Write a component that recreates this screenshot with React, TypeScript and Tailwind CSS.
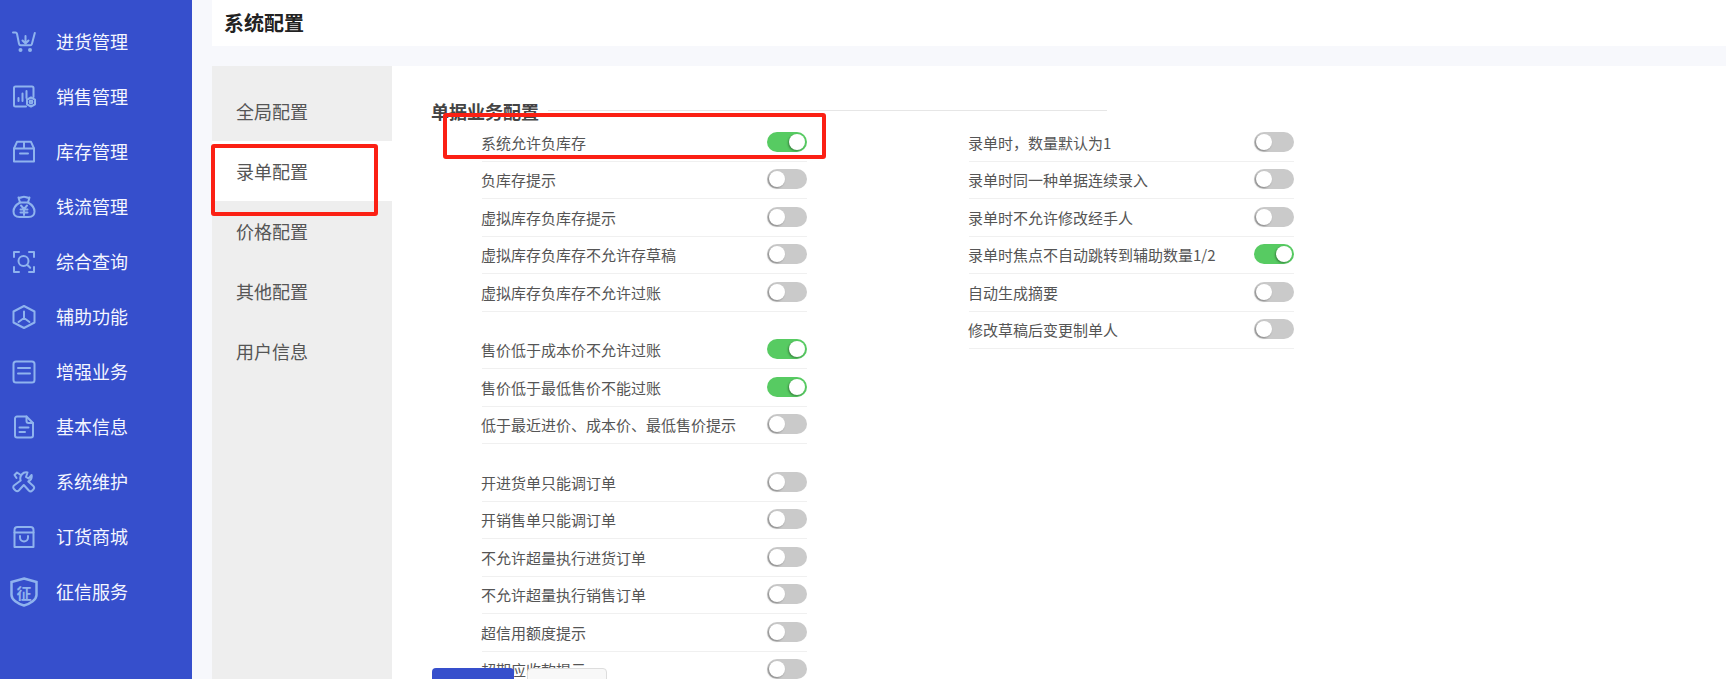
import type { ReactNode } from 'react';

const iconClass = 'h-6 w-6 shrink-0 fill-none stroke-[#8fb3ee] stroke-2';

function Svg({ children }: { children: ReactNode }) {
  return (
    <svg viewBox="0 0 24 24" className={iconClass} strokeLinecap="round" strokeLinejoin="round">
      {children}
    </svg>
  );
}

const menu: { label: string; icon: ReactNode }[] = [
  {
    label: '进货管理',
    icon: (
      <Svg>
        <path d="M1 2.500h2.500c.8 0 1.300.5 1.500 1.300l2 10c.2 1 .8 1.500 1.700 1.500h9.500c.9 0 1.500-.5 1.700-1.300L22.800 3" />
        <path d="M13.500 6v7M10.500 10.500l3 3 3-3" />
        <circle cx="8.500" cy="20" r="1" />
        <circle cx="18" cy="20" r="1" />
      </Svg>
    ),
  },
  {
    label: '销售管理',
    icon: (
      <Svg>
        <path d="M14 21.500H3.500a1.500 1.500 0 0 1-1.500-1.500V3a1.500 1.500 0 0 1 1.500-1.500h16.500A1.500 1.500 0 0 1 21.500 3v9" />
        <path d="M6.500 16v-3M10.500 16V8.500M14.500 13V6" />
        <path d="M19 12.500l4 2.200v4.600l-4 2.200-4-2.200v-4.600z" />
        <circle cx="19" cy="17" r="1.400" />
      </Svg>
    ),
  },
  {
    label: '库存管理',
    icon: (
      <Svg>
        <path d="M2 8.500 5 1.800h14l3 6.700v13H2z" />
        <path d="M2 8.500h20M12 2v6.500M8 13.500h8" />
      </Svg>
    ),
  },
  {
    label: '钱流管理',
    icon: (
      <Svg>
        <path d="M8 7.500 6.500 2.500c2 .8 3.500-.8 5.500-.8s3.500 1.600 5.500.8L16 7.500" />
        <path d="M8 7.500h8c4 2.200 6.500 5.800 6.500 9 0 3.500-2.500 5.500-6 5.500h-9c-3.500 0-6-2-6-5.500 0-3.200 2.500-6.800 6.500-9z" />
        <path d="M9 10.500l3 3.500 3-3.500M8.500 14.500h7M8.500 17.500h7M12 14v6" />
      </Svg>
    ),
  },
  {
    label: '综合查询',
    icon: (
      <Svg>
        <path d="M7 2H2v5M17 2h5v5M7 22H2v-5M17 22h5v-5" />
        <circle cx="11.500" cy="11" r="5" />
        <path d="M15.200 14.700l3 3" />
      </Svg>
    ),
  },
  {
    label: '辅助功能',
    icon: (
      <Svg>
        <path d="M12 1 22.500 6.500v11L12 23 1.500 17.500v-11z" />
        <path d="M12 6.500V13M12 13l-5.500 4M12 13l5.500 4" />
      </Svg>
    ),
  },
  {
    label: '增强业务',
    icon: (
      <Svg>
        <rect x="1.500" y="1.500" width="21" height="21" rx="2.500" />
        <path d="M6 8h12M6 13.500h12" />
      </Svg>
    ),
  },
  {
    label: '基本信息',
    icon: (
      <Svg>
        <path d="M14.500 1.500H5a2 2 0 0 0-2 2v17a2 2 0 0 0 2 2h14a2 2 0 0 0 2-2V8z" />
        <path d="M14.500 1.500V6a2 2 0 0 0 2 2H21M7.500 12.500h9M7.500 17h5.500" />
      </Svg>
    ),
  },
  {
    label: '系统维护',
    icon: (
      <Svg>
        <path d="M15.500 2.500a6 6 0 0 0-6.800 8L2 15.500c-1 .9-1 2.500 0 3.500l1.500 1.500c1 .9 2.400.9 3.300 0l5-5.500 5 5.500a2.500 2.500 0 0 0 3.500 0l1-1a2.500 2.500 0 0 0 0-3.500l-5-4.500a6 6 0 0 0 3.300-6.500L16.500 8.500 14 7z" />
        <path d="M8 4.500 5 2.500 2.500 5l2 3" />
      </Svg>
    ),
  },
  {
    label: '订货商城',
    icon: (
      <Svg>
        <path d="M2.500 5A3 3 0 0 1 5.500 2h13a3 3 0 0 1 3 3v17h-19z" />
        <path d="M2.500 7.500h19M8 11v1.500a4 4 0 0 0 8 0V11" />
      </Svg>
    ),
  },
];

const groups = [
  [
    { label: '系统允许负库存', on: true },
    { label: '负库存提示' },
    { label: '虚拟库存负库存提示' },
    { label: '虚拟库存负库存不允许存草稿' },
    { label: '虚拟库存负库存不允许过账' },
  ],
  [
    { label: '售价低于成本价不允许过账', on: true },
    { label: '售价低于最低售价不能过账', on: true },
    { label: '低于最近进价、成本价、最低售价提示' },
  ],
  [
    { label: '开进货单只能调订单' },
    { label: '开销售单只能调订单' },
    { label: '不允许超量执行进货订单' },
    { label: '不允许超量执行销售订单' },
    { label: '超信用额度提示' },
    { label: '超期应收款提示' },
  ],
];

const rightRows = [
  { label: '录单时，数量默认为1' },
  { label: '录单时同一种单据连续录入' },
  { label: '录单时不允许修改经手人' },
  { label: '录单时焦点不自动跳转到辅助数量1/2', on: true },
  { label: '自动生成摘要' },
  { label: '修改草稿后变更制单人' },
];

const tabs = ['全局配置', '录单配置', '价格配置', '其他配置', '用户信息'];

function Toggle({ on }: { on?: boolean }) {
  return (
    <span
      className={`flex h-5 w-10 shrink-0 items-center rounded-full px-[2px] ${
        on ? 'justify-end bg-[#57cb62]' : 'justify-start bg-[#cacaca]'
      }`}
    >
      <span className="h-4 w-4 rounded-full bg-white shadow-[-1px_1px_2px_rgba(0,0,0,0.35)]" />
    </span>
  );
}

function Row({ label, on }: { label: string; on?: boolean }) {
  return (
    <div className="flex h-[37.5px] w-[325px] items-center justify-between border-b border-[#f0f0f0] pb-[1px]">
      <span className="-ml-px pt-[2px] text-[15px] text-[#555]">{label}</span>
      <Toggle on={on} />
    </div>
  );
}

export default function App() {
  return (
    <div className="flex h-[679px] overflow-hidden bg-[#f7f8fc] font-['Noto_Sans_CJK_SC','Noto_Sans',sans-serif]">
      <aside className="flex w-[192px] shrink-0 flex-col bg-[#364fcc] pt-[14.5px]">
        {menu.map((item) => (
          <div key={item.label} className="flex h-[55px] shrink-0 items-center gap-5 pl-3">
            {item.icon}
            <span className="pb-[2px] text-lg text-[#f4f6ff]">{item.label}</span>
          </div>
        ))}
        <div className="flex h-[55px] shrink-0 items-center gap-[18px] pl-[10px]">
          <span className="relative flex h-[30px] w-[28px] items-center justify-center">
            <svg viewBox="0 0 28 30" className="absolute inset-0 h-full w-full fill-none stroke-[#8fb3ee] stroke-[2.5]">
              <path d="M14 1.500 26.500 5v13c0 4.500-6 8.500-12.500 10.500C7.500 26.500 1.500 22.500 1.500 18V5z" />
            </svg>
            <span className="relative text-[15px] font-bold leading-none text-[#8fb3ee]">征</span>
          </span>
          <span className="pb-[2px] text-lg text-[#f4f6ff]">征信服务</span>
        </div>
      </aside>

      <main className="flex min-w-0 flex-1 flex-col pl-5">
        <header className="flex h-[46px] shrink-0 items-center bg-white pl-3">
          <h1 className="text-[20px] font-bold text-[#222]">系统配置</h1>
        </header>

        <div className="relative mt-5 flex min-h-0 flex-1 bg-white">
          <nav className="w-[180px] shrink-0 bg-[#eeeeee] pt-[15px]">
            {tabs.map((tab) => (
              <div
                key={tab}
                className={`flex h-[60px] items-center pl-6 text-lg text-[#555] ${
                  tab === '录单配置' ? 'bg-white' : ''
                }`}
              >
                {tab}
              </div>
            ))}
          </nav>

          <section className="min-w-0 flex-1 overflow-hidden pl-10 pt-[32px]">
            <div className="flex h-[26px] w-[675px] items-start">
              <h2 className="-ml-px text-lg leading-[26px] font-bold text-[#444]">单据业务配置</h2>
              <div className="mt-[12px] ml-[9px] flex-1 border-t border-[#e6e6e6]" />
            </div>

            <div className="flex gap-[162px] pl-[50px]">
              <div className="flex flex-col gap-5">
                {groups.map((rows, i) => (
                  <div key={i}>
                    {rows.map((row) => (
                      <Row key={row.label} label={row.label} on={row.on} />
                    ))}
                  </div>
                ))}
              </div>
              <div>
                {rightRows.map((row) => (
                  <Row key={row.label} label={row.label} on={row.on} />
                ))}
              </div>
            </div>
          </section>

          {/* red annotation boxes from the screenshot */}
          <div className="absolute top-[47px] left-[231px] h-[46px] w-[383px] rounded-[3px] border-4 border-[#fb2014]" />
          <div className="absolute top-[78px] left-[-1px] h-[72px] w-[167px] rounded-[3px] border-4 border-[#fb2014]" />

          <div className="absolute top-[602px] left-[220px] flex gap-[13px]">
            <div className="h-[40px] w-[82px] rounded-t-[4px] bg-[#364fcc]" />
            <div className="h-[40px] w-[80px] rounded-t-[4px] border border-[#dddddd] bg-[#f8f8f8]" />
          </div>
        </div>
      </main>
    </div>
  );
}
